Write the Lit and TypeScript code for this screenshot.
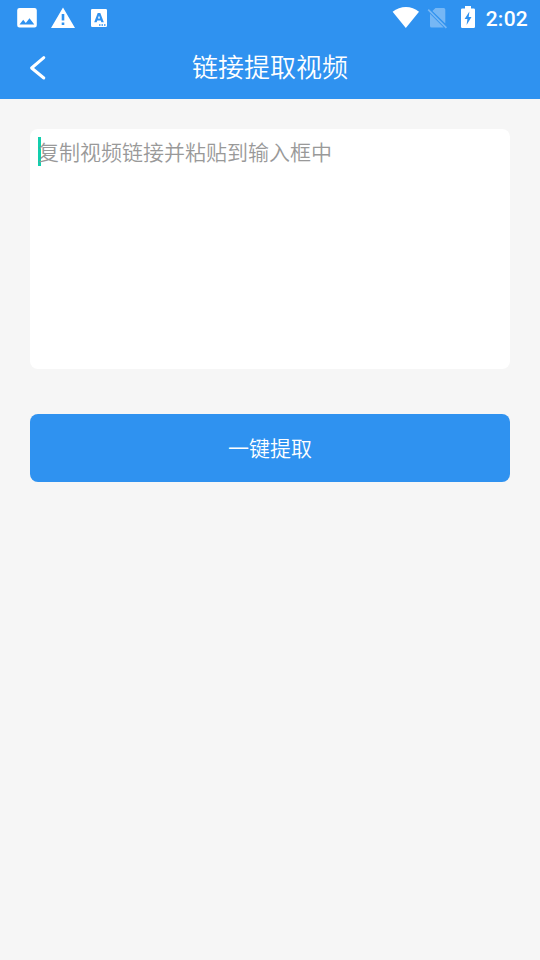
import { LitElement, html, css } from "lit";
import { customElement } from "lit/decorators.js";

@customElement("status-bar")
class StatusBar extends LitElement {
  static styles = css`
    :host {
      display: flex;
      justify-content: space-between;
      height: 36px;
      color: #fff;
    }
    svg {
      display: block;
      fill: currentColor;
    }
    .side {
      display: flex;
      align-items: center;
    }
    .notices {
      gap: 12px;
      padding-left: 15px;
    }
    .system {
      padding-right: 12px;
    }
    .sim {
      margin-left: 7px;
      opacity: 0.34;
    }
    .battery {
      margin-left: 13px;
    }
    .time {
      margin-left: 10px;
      padding-top: 2px;
      font: 500 21px/34px Roboto, sans-serif;
      letter-spacing: 0.25px;
    }
  `;

  render() {
    return html`
      <div class="side notices">
        <svg width="24" height="36" viewBox="0 0 24 36">
          <path fill-rule="evenodd" d="M4.500 8h15a2.300 2.300 0 0 1 2.300 2.300v15a2.300 2.300 0 0 1-2.300 2.300h-15a2.300 2.300 0 0 1-2.300-2.300v-15A2.300 2.300 0 0 1 4.500 8zM4.500 24.500h14.800l-4.800-6.300-3.700 4.700-2.600-3.100z"/>
        </svg>
        <svg width="24" height="36" viewBox="0 0 24 36">
          <path fill-rule="evenodd" d="M12 7.500L24 28H0zM10.700 14v6.500h2.600V14zM10.700 22.500V25h2.600v-2.500z"/>
        </svg>
        <svg width="24" height="36" viewBox="0 0 24 36">
          <path fill-rule="evenodd" d="M5.200 9h13.600q1.200 0 1.200 1.200v15.600q0 1.200-1.200 1.200H5.200Q4 27 4 25.800V10.200Q4 9 5.200 9zM10.700 13L7.200 22.300h2.400l.7-1.900h3.400l.7 1.900h2.400L13.300 13zM10.900 18.500l1.100-3.100 1.100 3.100zM12 24.300v1.400h1.500v-1.400zM14.500 24.300v1.400h1.500v-1.400zM17 24.300v1.400h1.500v-1.400z"/>
        </svg>
      </div>
      <div class="side system">
        <svg width="28" height="36" viewBox="0 0 28 36">
          <path d="M.600 11.700C8.300 5.400 19.700 5.400 27 11.700L13.800 28z"/>
        </svg>
        <svg class="sim" width="20" height="36" viewBox="0 0 20 36">
          <path d="M8.500 8h8.200q1.600 0 1.600 1.600v14L5.400 10.900zM1.800 9L20 27.200l-1.200 1.200L.600 10.200zM3 13.800L16.700 27.500H4.600Q3 27.500 3 25.900z"/>
        </svg>
        <svg class="battery" width="16" height="36" viewBox="0 0 16 36">
          <path fill-rule="evenodd" d="M5 6h6v2.400h2.700q1.300 0 1.300 1.300v17q0 1.300-1.300 1.300H2.300Q1 28 1 26.700v-17q0-1.300 1.300-1.300H5zM9.400 11.500L4.600 19H7.400L6.600 25 11.500 17H8.700z"/>
        </svg>
        <span class="time">2:02</span>
      </div>
    `;
  }
}

@customElement("app-root")
class AppRoot extends LitElement {
  static styles = css`
    :host {
      display: block;
      min-height: 960px;
      background: #f6f6f6;
      font-family: "Noto Sans CJK SC", sans-serif;
      font-weight: 350;
    }
    header {
      height: 99px;
      background: #2f92f0;
      color: #fff;
    }
    .title-bar {
      display: grid;
      grid-template-columns: 76px 1fr 76px;
      align-items: center;
      height: 63px;
    }
    .back {
      display: block;
      margin-left: 28px;
      fill: none;
      stroke: currentColor;
      stroke-width: 3;
      stroke-linecap: round;
      stroke-linejoin: round;
    }
    h1 {
      margin: 0;
      padding-bottom: 4px;
      font-size: 26px;
      line-height: 58px;
      font-weight: inherit;
      text-align: center;
    }
    main {
      display: grid;
      gap: 45px;
      padding: 30px;
    }
    .field {
      display: flex;
      align-items: flex-start;
      box-sizing: border-box;
      height: 240px;
      padding: 8px;
      border-radius: 8px;
      background: #fff;
      color: #999;
      font-size: 21px;
      line-height: 29px;
    }
    .caret {
      width: 3px;
      height: 29px;
      margin-right: -3px;
      background: #12cfae;
    }
    .extract {
      height: 68px;
      padding: 0 0 2px;
      border: 0;
      border-radius: 8px;
      background: #2f92f0;
      color: #fff;
      font: inherit;
      font-size: 21px;
      line-height: 66px;
    }
  `;

  render() {
    return html`
      <header>
        <status-bar></status-bar>
        <div class="title-bar">
          <svg class="back" width="20" height="26" viewBox="0 0 20 26">
            <path d="M15.800 2.700L3.600 13 15.800 23"/>
          </svg>
          <h1>链接提取视频</h1>
        </div>
      </header>
      <main>
        <div class="field">
          <span class="caret"></span>
          <span>复制视频链接并粘贴到输入框中</span>
        </div>
        <button class="extract">一键提取</button>
      </main>
    `;
  }
}
